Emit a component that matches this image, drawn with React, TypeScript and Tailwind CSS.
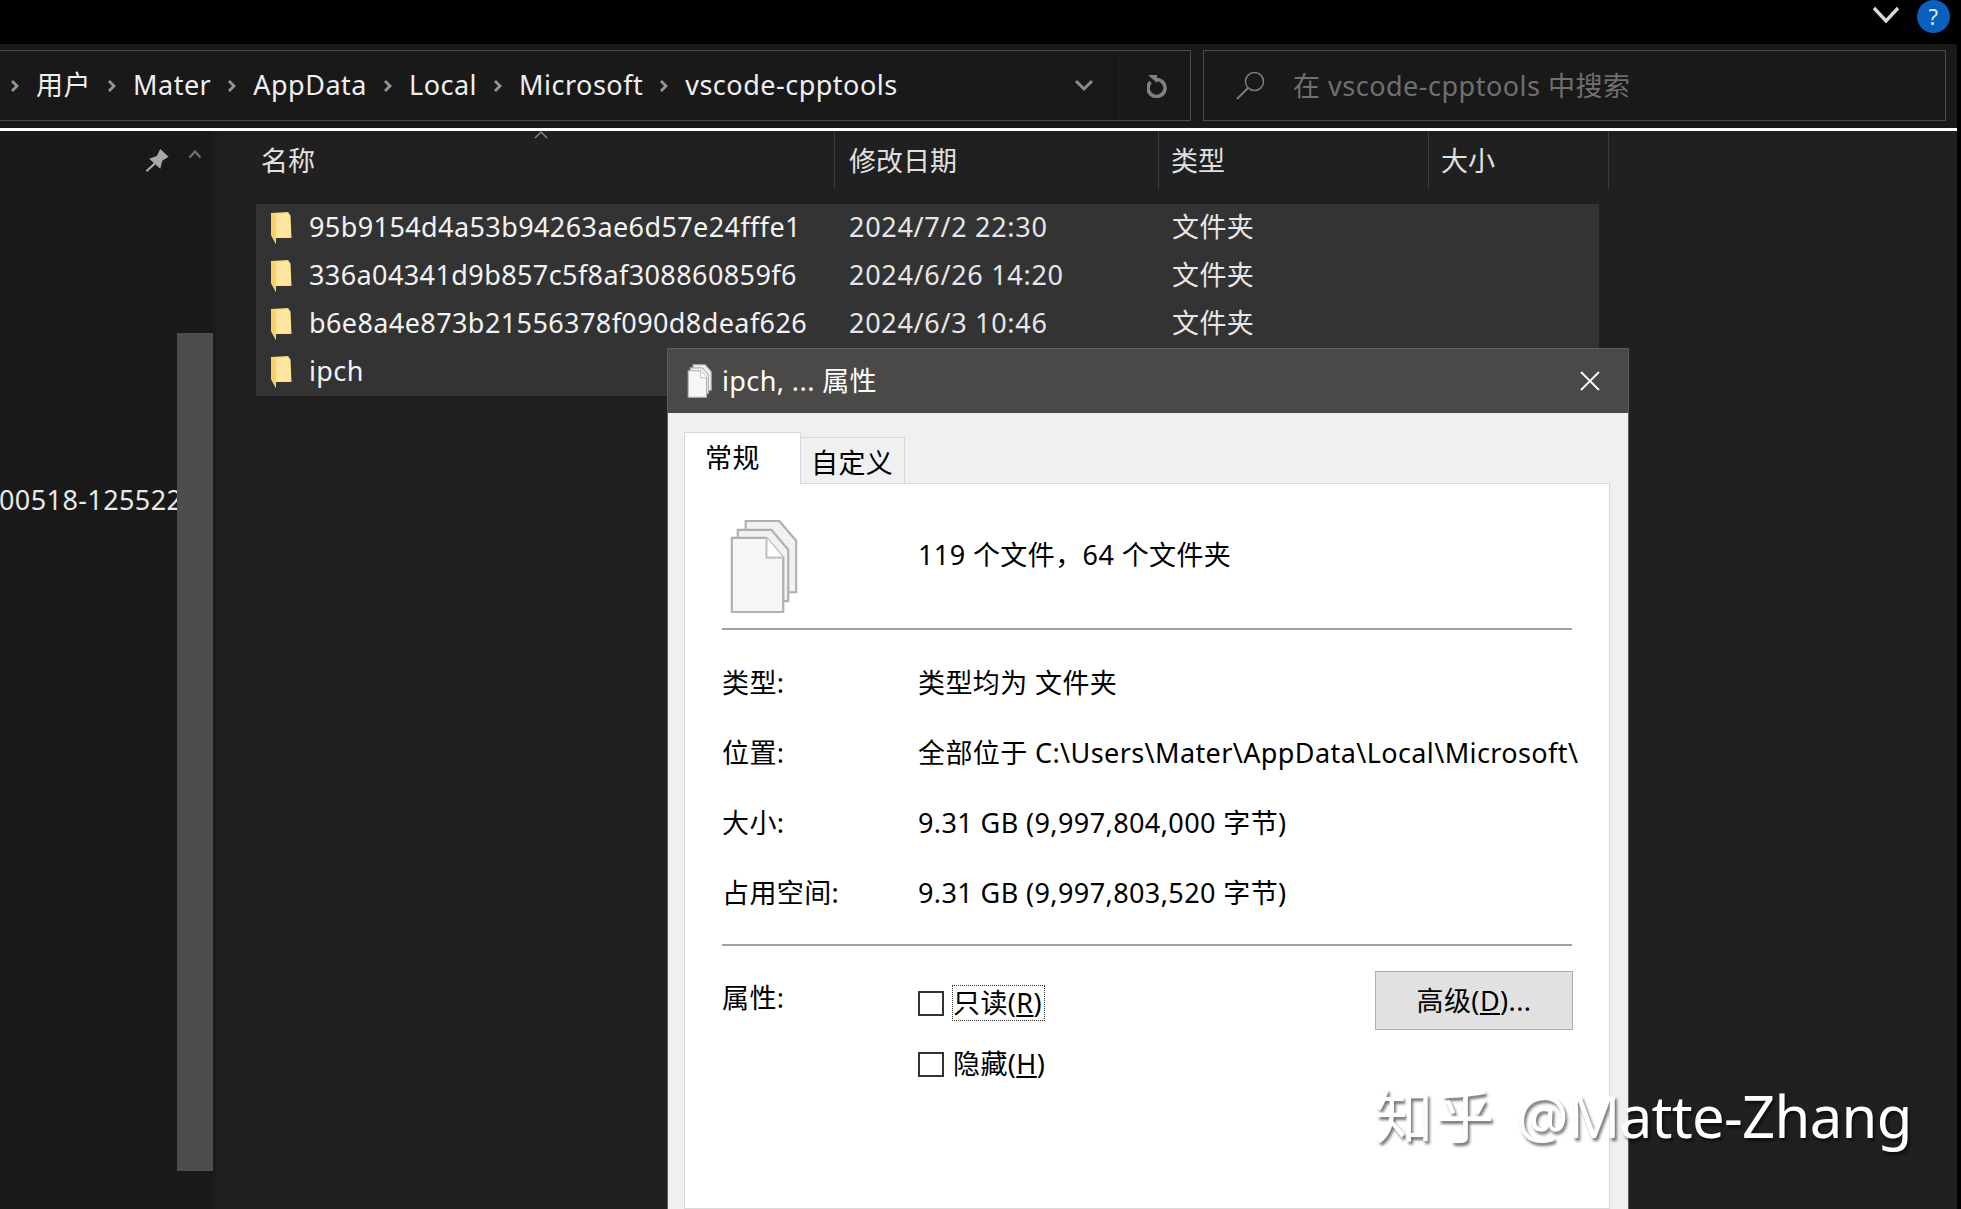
const FILES = [
  { name: '95b9154d4a53b94263ae6d57e24fffe1', date: '2024/7/2 22:30', type: '文件夹' },
  { name: '336a04341d9b857c5f8af308860859f6', date: '2024/6/26 14:20', type: '文件夹' },
  { name: 'b6e8a4e873b21556378f090d8deaf626', date: '2024/6/3 10:46', type: '文件夹' },
  { name: 'ipch', date: '', type: '' },
];

const CRUMBS = ['用户', 'Mater', 'AppData', 'Local', 'Microsoft', 'vscode-cpptools'];

const DETAILS = [
  { label: '类型:', value: '类型均为 文件夹' },
  { label: '位置:', value: '全部位于 C:\\Users\\Mater\\AppData\\Local\\Microsoft\\' },
  { label: '大小:', value: '9.31 GB (9,997,804,000 字节)' },
  { label: '占用空间:', value: '9.31 GB (9,997,803,520 字节)' },
];

function Crumb() {
  return (
    <svg width="10" height="14" viewBox="0 0 10 14" className="shrink-0">
      <path d="M2 2l5 5-5 5" fill="none" stroke="#969696" strokeWidth="2.800" />
    </svg>
  );
}

function FolderIcon() {
  return (
    <svg width="22" height="33" viewBox="0 0 22 33" className="block shrink-0">
      <path d="M1 1L18 0l2.500 3.500 1 22.500H6v6l-5-9z" fill="#fbd978" />
      <path d="M6 2.500L18 1.500l2 3 1 21H6z" fill="#fde7a0" />
      <path d="M1 1l5 1.500V32l-5-9z" fill="#f8d069" />
    </svg>
  );
}

function PagesIcon({ className, stroke = 1.6 }: { className: string; stroke?: number }) {
  const pages = [
    'M25 10h34l17 20v52H25z',
    'M17 19h34l17 20v52H17z',
    'M11 27h35l17 20v55H11z',
  ];
  return (
    <svg viewBox="8 8 70 96" className={className}>
      {pages.map((d, i) => (
        <path key={i} d={d} fill={i === 2 ? '#f6f6f6' : '#f1f1f1'} stroke="#b0b0b0" strokeWidth={stroke} />
      ))}
      <path d="M46 27v20h17" fill="#fff" stroke="#c4c4c4" strokeWidth={stroke} />
    </svg>
  );
}

function HeaderCell({ label, className }: { label: string; className: string }) {
  return (
    <div className={`flex h-full items-center border-r border-[#3a3a3a] pt-[3px] tracking-[0px] text-[#e0e0e0] ${className}`}>{label}</div>
  );
}

function Checkbox({ label, focused }: { label: React.ReactNode; focused?: boolean }) {
  return (
    <div className="flex h-9 items-center gap-2">
      <span className="h-[25px] w-[26px] shrink-0 border-2 border-[#333] bg-white" />
      <span className={`flex h-9 items-center border border-dotted pr-0.5 ${focused ? 'border-[#333]' : 'border-transparent'}`}>
        {label}
      </span>
    </div>
  );
}

function PropertiesDialog() {
  return (
    <div className="absolute left-[667px] top-[348px] flex h-[861px] w-[962px] flex-col border-x border-[#5a5a5a] bg-[#f0f0f0] text-black">
      <div className="flex h-[65px] shrink-0 items-center border-t border-[#5c5c5c] bg-[#4a4948] pl-[18px] pr-[27px] text-white">
        <PagesIcon className="h-[34px] w-[27px] shrink-0" stroke={3} />
        <span className="ml-[9px]">ipch, ... 属性</span>
        <svg width="22" height="22" viewBox="0 0 22 22" className="ml-auto">
          <path d="M2 2l18 18M20 2L2 20" stroke="#fff" strokeWidth="1.800" />
        </svg>
      </div>
      <div className="flex h-[70px] shrink-0 items-end pl-[16px] pt-[19px]">
        <div className="relative z-10 -mb-px flex h-[52px] w-[117px] border-x border-t border-[#d9d9d9] bg-white pl-[20px] pt-[5px]">常规</div>
        <div className="flex h-[46px] w-[104px] border-r border-t border-[#d9d9d9] pl-[10px] pt-[5px]">自定义</div>
      </div>
      <div className="ml-[16px] w-[926px] flex-1 border border-[#d9d9d9] bg-white px-[37px]">
        <div className="flex h-[146px] border-b-2 border-[#a0a0a0] pt-[35px]">
          <div className="w-[196px] pl-[6px]">
            <PagesIcon className="h-[95px] w-[71px]" stroke={2.2} />
          </div>
          <p className="pt-[16px]">119 个文件，64 个文件夹</p>
        </div>
        <div className="border-b-2 border-[#a0a0a0] pb-[16px] pt-[18px]">
          {DETAILS.map((d) => (
            <div key={d.label} className="flex h-[70px] items-center">
              <span className="w-[196px] shrink-0">{d.label}</span>
              <span className="whitespace-nowrap">{d.value}</span>
            </div>
          ))}
        </div>
        <div className="flex pt-[25px]">
          <span className="w-[196px] shrink-0 pt-[7px]">属性:</span>
          <div className="flex flex-col gap-[25px] pt-[14px]">
            <Checkbox focused label={<>只读(<span className="underline">R</span>)</>} />
            <Checkbox label={<>隐藏(<span className="underline">H</span>)</>} />
          </div>
          <button className="-mr-px ml-auto flex h-[59px] w-[198px] items-center justify-center border border-[#adadad] bg-[#e1e1e1] pt-px">
            <span>高级(<span className="underline">D</span>)...</span>
          </button>
        </div>
      </div>
    </div>
  );
}

export default function App() {
  return (
    <div className="relative h-[1209px] w-[1961px] overflow-hidden bg-black font-['Noto_Sans','Noto_Sans_CJK_SC',sans-serif] text-[27px] tracking-[0.4px]">
      <div className="flex h-[1209px] w-[1957px] flex-col">
        {/* title strip */}
        <div className="flex h-[44px] shrink-0 items-start justify-end bg-black pr-[7px]">
          <svg width="28" height="18" viewBox="0 0 28 18" className="mr-[17px] mt-[6px]">
            <path d="M2 2l12 13L26 2" fill="none" stroke="#d8d8d8" strokeWidth="3.400" />
          </svg>
          <div className="flex h-[33px] w-[33px] items-center justify-center rounded-full bg-[#0a5fbf] text-[22px] text-[#dfeaf7]">?</div>
        </div>

        {/* address + search */}
        <div className="flex h-[84px] shrink-0 gap-[12px] bg-[#191919] pr-[11px] pt-[6px]">
          <div className="flex h-[71px] w-[1191px] shrink-0 items-center border-y border-r border-[#4a4a4a] pl-[10px] text-[#efefef]">
            <div className="flex items-center gap-[16px] tracking-[0.5px]">
              {CRUMBS.map((c) => (
                <div key={c} className="flex items-center gap-[16px]">
                  <Crumb />
                  <span>{c}</span>
                </div>
              ))}
            </div>
            <div className="ml-auto flex w-[45px] items-center justify-start">
              <svg width="20" height="13" viewBox="0 0 20 13">
                <path d="M2 2l8 8 8-8" fill="none" stroke="#8a8a8a" strokeWidth="3" />
              </svg>
            </div>
            <div className="flex h-full w-[71px] items-center justify-center border-l border-[#1e1e1e] pl-[5px]">
              <svg width="22" height="24" viewBox="0 0 22 24">
                <path d="M9 5.500A8.500 8.500 0 1 1 3.500 8" fill="none" stroke="#808080" strokeWidth="3.600" />
                <path d="M1 1h9v8z" fill="#808080" />
              </svg>
            </div>
          </div>
          <div className="flex h-[71px] flex-1 items-center border border-[#4a4a4a] pl-[31px] text-[#6f6f6f]">
            <svg width="30" height="30" viewBox="0 0 30 30" className="shrink-0">
              <circle cx="19.500" cy="10.500" r="9" fill="none" stroke="#7c7c7c" strokeWidth="1.500" />
              <path d="M13 17L2 28" stroke="#7c7c7c" strokeWidth="2" />
            </svg>
            <span className="ml-[28px] pt-px tracking-[0.5px]">在 vscode-cpptools 中搜索</span>
          </div>
        </div>
        <div className="h-[3px] shrink-0 bg-white" />

        <div className="flex min-h-0 flex-1">
          {/* nav pane */}
          <div className="flex w-[217px] shrink-0 flex-col border-r-4 border-[#1c1c1c] bg-[#191919]">
            <div className="flex h-[47px] shrink-0 items-start justify-end gap-[18px] pr-[11px] pt-[16px]">
              <svg width="25" height="27" viewBox="48 62 72 78">
                <path d="M60 96l22-8 10-20 24 22-18 12-6 23z" fill="#a3abb0" />
                <path d="M52 132l24-22" stroke="#a3abb0" strokeWidth="6" />
              </svg>
              <svg width="14" height="10" viewBox="0 0 14 10" className="mt-[2px]">
                <path d="M1.500 8.500L7 2.500l5.500 6" fill="none" stroke="#6e6e6e" strokeWidth="2.400" />
              </svg>
            </div>
            <div className="flex min-h-0 flex-1">
              <div className="w-[177px] overflow-hidden pt-[302px]">
                <div className="-ml-px flex h-10 items-center whitespace-nowrap text-[#e8e8e8]">00518-125522</div>
              </div>
              <div className="flex-1 pb-[39px] pr-0 pt-[155px]">
                <div className="h-[838px] w-[36px] bg-[#4d4d4d]" />
              </div>
            </div>
          </div>

          {/* file list */}
          <div className="min-w-0 flex-1 bg-[#202020]">
            <div className="relative flex h-[58px] items-center">
              <HeaderCell label="名称" className="w-[618px] pl-[44px]" />
              <HeaderCell label="修改日期" className="w-[324px] pl-[14px]" />
              <HeaderCell label="类型" className="w-[270px] pl-[12px]" />
              <HeaderCell label="大小" className="w-[180px] pl-[12px]" />
              <svg width="14" height="8" viewBox="0 0 14 8" className="absolute left-[317px] top-0">
                <path d="M1 7l6-6 6 6" fill="none" stroke="#8a8a8a" strokeWidth="1.400" />
              </svg>
            </div>
            <div className="ml-[39px] mt-[15px] w-[1343px] bg-[#333333] text-[#e6e6e6]">
              {FILES.map((f) => (
                <div key={f.name} className="flex h-[48px] items-center pl-[14px]">
                  <span className="w-[39px] shrink-0">
                    <FolderIcon />
                  </span>
                  <span className="w-[540px] shrink-0 pb-[2px] text-[#f2f2f2]">{f.name}</span>
                  <span className="w-[323px] shrink-0 pb-[2px] tracking-[0.7px]">{f.date}</span>
                  <span className="pb-[2px]">{f.type}</span>
                </div>
              ))}
            </div>
          </div>
        </div>
      </div>

      <PropertiesDialog />

      <div className="pointer-events-none absolute left-[1375px] top-[1072px] whitespace-nowrap text-[58px] tracking-[-0.7px] text-white [text-shadow:2px_3px_3px_rgba(0,0,0,0.55)]">
        <span className="tracking-[3px]">知乎</span> <span className="ml-[5px]">@Matte-Zhang</span>
      </div>
    </div>
  );
}
